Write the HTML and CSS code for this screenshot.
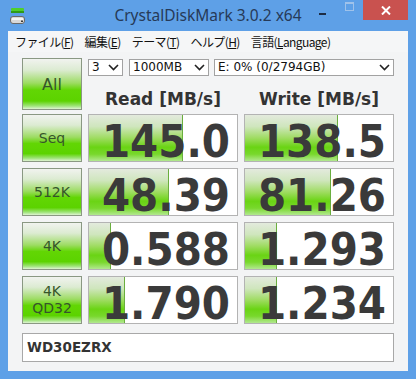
FILE: index.html
```html
<!DOCTYPE html>
<html lang="ja">
<head>
    <meta charset="UTF-8">
    <title>CrystalDiskMark 3.0.2 x64</title>
    <link rel="stylesheet" href="styles.css">
</head>
<body>
    <div class="window">
        <div class="titlebar">
            <div class="tb-left">
                <svg class="app-icon" width="16" height="17" viewBox="0 0 16 17">
                    <rect x="1" y="0" width="13" height="3" rx="1" fill="#4fcf2a"/>
                    <rect x="1" y="3" width="13" height="2" fill="#2f9a18"/>
                    <rect x="0.5" y="8.5" width="14" height="7" rx="2.5" fill="#d8d8d8" stroke="#6a6a6a"/>
                    <rect x="2" y="10" width="11" height="2" fill="#f4f4f4"/>
                    <rect x="11" y="12.5" width="2" height="1.5" fill="#3a3a3a"/>
                </svg>
            </div>
            <div class="title">CrystalDiskMark 3.0.2 x64</div>
            <div class="controls">
                <span class="ctl ctl-min"><span class="dash"></span></span>
                <span class="ctl ctl-max"><span class="box"></span></span>
                <span class="ctl ctl-close">
                    <svg width="10" height="9" viewBox="0 0 10 9">
                        <path d="M1 0.5 L9 8.5 M9 0.5 L1 8.5" stroke="#fff" stroke-width="2"/>
                    </svg>
                </span>
            </div>
        </div>

        <div class="menubar">
            <span class="menu-item">ファイル(<u>F</u>)</span>
            <span class="menu-item">編集(<u>E</u>)</span>
            <span class="menu-item">テーマ(<u>T</u>)</span>
            <span class="menu-item">ヘルプ(<u>H</u>)</span>
            <span class="menu-item">言語(<u>L</u>anguage)</span>
        </div>

        <div class="client">
            <div class="top">
                <div class="btn btn-all">All</div>
                <div class="selects">
                    <div class="combo combo-count">3<svg class="chev" width="11" height="7" viewBox="0 0 11 7"><path d="M1 1 L5.5 5.5 L10 1" fill="none" stroke="#222" stroke-width="1.6"/></svg></div>
                    <div class="combo combo-size">1000MB<svg class="chev" width="11" height="7" viewBox="0 0 11 7"><path d="M1 1 L5.5 5.5 L10 1" fill="none" stroke="#222" stroke-width="1.6"/></svg></div>
                    <div class="combo combo-drive">E: 0% (0/2794GB)<svg class="chev" width="11" height="7" viewBox="0 0 11 7"><path d="M1 1 L5.5 5.5 L10 1" fill="none" stroke="#222" stroke-width="1.6"/></svg></div>
                </div>
                <div class="head">Read [MB/s]</div>
                <div class="head">Write [MB/s]</div>
            </div>

            <div class="results">
                <div class="btn">Seq</div>
                <div class="result"><div class="bar" style="width: 94px"></div><span class="value">145.0</span></div>
                <div class="result"><div class="bar" style="width: 93px"></div><span class="value">138.5</span></div>

                <div class="btn">512K</div>
                <div class="result"><div class="bar" style="width: 80px"></div><span class="value">48.39</span></div>
                <div class="result"><div class="bar" style="width: 86px"></div><span class="value">81.26</span></div>

                <div class="btn">4K</div>
                <div class="result"><div class="bar" style="width: 22px"></div><span class="value">0.588</span></div>
                <div class="result"><div class="bar" style="width: 32px"></div><span class="value">1.293</span></div>

                <div class="btn btn-two">4K<br>QD32</div>
                <div class="result"><div class="bar" style="width: 36px"></div><span class="value">1.790</span></div>
                <div class="result"><div class="bar" style="width: 32px"></div><span class="value">1.234</span></div>
            </div>

            <div class="comment">WD30EZRX</div>
        </div>
    </div>
</body>
</html>
```

FILE: styles.css
```css
body {
    margin: 0;
    padding: 0;
}
.window {
    width: 416px;
    height: 379px;
    box-sizing: border-box;
    padding: 0 8px 8px;
    background-color: #5ea0e7;
    display: flex;
    flex-direction: column;
    font-family: "DejaVu Sans", sans-serif;
}

/* title bar */
.titlebar {
    height: 31px;
    display: grid;
    grid-template-columns: 1fr auto 1fr;
    align-items: start;
}
.app-icon {
    display: block;
    margin: 8px 0 0 2px;
}
.title {
    font-family: "Noto Sans", sans-serif;
    font-size: 15.5px;
    line-height: 31px;
    color: #263a58;
}
.controls {
    display: flex;
    justify-content: flex-end;
}
.ctl {
    height: 20px;
    display: flex;
    align-items: center;
    justify-content: center;
}
.ctl-min {
    width: 26px;
}
.ctl-min .dash {
    width: 7px;
    height: 2px;
    margin-top: 7px;
    background-color: #1d2c44;
}
.ctl-max {
    width: 28px;
}
.ctl-max .box {
    width: 7px;
    height: 6px;
    margin-top: -7px;
    border: 1px solid #9fc2ea;
    border-top-width: 2px;
}
.ctl-close {
    width: 45px;
    background-color: #c9524f;
}

/* menu */
.menubar {
    height: 21px;
    display: flex;
    align-items: center;
    gap: 11px;
    padding-left: 7px;
    background-color: #f5f6f7;
    font-family: "Noto Sans CJK JP", sans-serif;
    font-size: 12px;
    letter-spacing: -0.6px;
    color: #111;
}
.menu-item {
    white-space: nowrap;
}

/* client area */
.client {
    flex: 1;
    background-color: #f3f4f5;
    padding: 6px 14px 9px;
}
.top {
    display: grid;
    grid-template-columns: 60px 150px 150px;
    grid-template-rows: 18px 34px;
    column-gap: 6px;
}
.btn {
    box-sizing: border-box;
    border: 1px solid #8a9883;
    background: linear-gradient(to bottom, #f1f3ef 0%, #dcebd2 22%, #9ddc63 48%, #62d604 62%, #5cd300 84%, #9fe47a 94%, #dff3d3 100%);
    color: #36552a;
    font-size: 14px;
    display: flex;
    align-items: center;
    justify-content: center;
    text-align: center;
}
.btn-all {
    grid-row: 1 / 3;
    font-size: 16px;
}
.btn-two {
    line-height: 17px;
}
.selects {
    grid-column: 2 / 4;
    display: flex;
    margin-top: 1px;
}
.combo {
    box-sizing: border-box;
    height: 17px;
    border: 1px solid #a2a2a2;
    background-color: #fff;
    font-size: 12px;
    line-height: 15px;
    padding-left: 3px;
    color: #111;
    display: flex;
    align-items: center;
    justify-content: space-between;
}
.chev {
    margin-right: 3px;
}
.combo-count {
    width: 35px;
    margin-right: 6px;
}
.combo-size {
    width: 80px;
    margin-right: 5px;
}
.combo-drive {
    width: 180px;
}
.head {
    font-size: 17px;
    font-weight: bold;
    color: #333;
    text-align: center;
    line-height: 20px;
    align-self: end;
    margin-bottom: 1px;
}

/* results */
.results {
    margin-top: 4px;
    display: grid;
    grid-template-columns: 60px 150px 150px;
    grid-auto-rows: 48px;
    gap: 6px;
}
.result {
    position: relative;
    box-sizing: border-box;
    border: 1px solid #b3b3b3;
    background-color: #fff;
    text-align: right;
    padding-right: 7px;
}
.bar {
    position: absolute;
    left: 0;
    top: 0;
    bottom: 0;
    background: linear-gradient(to bottom, #e3eadd 0%, #cfe6bd 25%, #9fdc62 50%, #6ad414 70%, #78d82c 85%, #b2e890 100%);
    box-shadow: inset -1px 0 #6aae3e;
}
.value {
    position: relative;
    font-family: "DejaVu Sans Condensed", "DejaVu Sans", sans-serif;
    font-stretch: condensed;
    font-weight: bold;
    font-size: 45px;
    line-height: 53px;
    color: #3a3a3a;
}

.comment {
    box-sizing: border-box;
    height: 29px;
    margin-top: 9px;
    border: 1px solid #a8a8a8;
    background-color: #fff;
    padding-left: 4px;
    font-size: 13.5px;
    font-weight: bold;
    line-height: 27px;
    color: #333;
}
```
